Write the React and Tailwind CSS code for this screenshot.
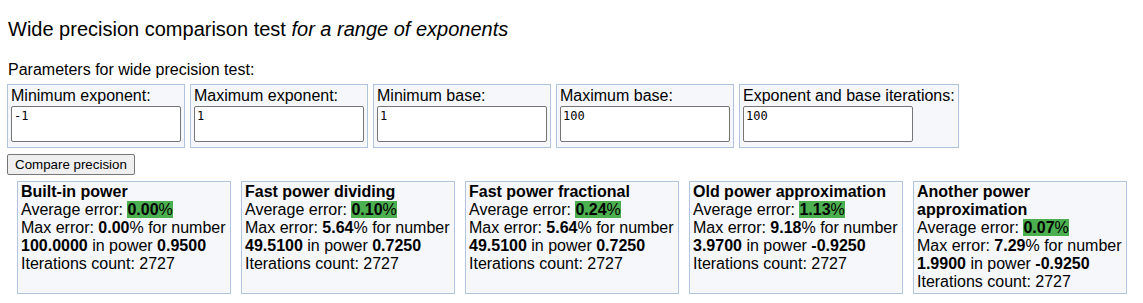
import React from "react";

const params = [
  { label: "Minimum exponent:", value: "-1" },
  { label: "Maximum exponent:", value: "1" },
  { label: "Minimum base:", value: "1" },
  { label: "Maximum base:", value: "100" },
  { label: "Exponent and base iterations:", value: "100" },
];

const results = [
  { name: "Built-in power", avg: "0.00", max: "0.00", num: "100.0000", pow: "0.9500" },
  { name: "Fast power dividing", avg: "0.10", max: "5.64", num: "49.5100", pow: "0.7250" },
  { name: "Fast power fractional", avg: "0.24", max: "5.64", num: "49.5100", pow: "0.7250" },
  { name: "Old power approximation", avg: "1.13", max: "9.18", num: "3.9700", pow: "-0.9250" },
  { name: "Another power approximation", avg: "0.07", max: "7.29", num: "1.9900", pow: "-0.9250" },
];

const App = () => {
  return (
    <div className="min-h-screen bg-white text-black font-['Liberation_Sans',Arial,sans-serif] pt-[18px] px-[7px]">
      {/* Heading */}
      <div className="text-[20px] leading-[23px] pl-[1px]">
        Wide precision comparison test <i>for a range of exponents</i>
      </div>

      <div className="mt-[20px] text-[16px] leading-[18px] pl-[1px]">
        Parameters for wide precision test:
      </div>

      {/* Parameter inputs */}
      <div className="mt-[5px] flex items-start gap-[5px]">
        {params.map((p) => (
          <div
            key={p.label}
            className="border border-[#b0c4de] bg-[#f5f7fa] pl-[3px] pr-[3px] pt-[2px] pb-[5px]"
          >
            <div className="text-[16px] leading-[18px] mb-[1px] whitespace-nowrap">{p.label}</div>
            <textarea
              defaultValue={p.value}
              className="block w-[170px] h-[36px] resize-none bg-white border border-[#767676] rounded-[2px] p-[2px] font-['DejaVu_Sans_Mono',monospace] text-[12px] leading-[15px] text-black"
            />
          </div>
        ))}
      </div>

      <button className="mt-[6px] block h-[21px] px-[7px] bg-[#efefef] border border-[#767676] rounded-[2px] text-[13.33px] leading-[15px] text-black">
        Compare precision
      </button>

      {/* Result cards */}
      <div className="mt-[6px] ml-[10px] mr-[9px] flex gap-[10px]">
        {results.map((r) => (
          <div
            key={r.name}
            className="flex-1 h-[113px] border border-[#b0c4de] bg-[#f5f7fa] pl-[3px] pr-[2px] pt-[1px] text-[16px] leading-[18px]"
          >
            <div className="font-bold">{r.name}</div>
            <div className="whitespace-nowrap">
              Average error: <span className="bg-[#4caf50]"><b>{r.avg}</b>%</span>
            </div>
            <div className="whitespace-nowrap">
              Max error: <b>{r.max}</b>% for number
            </div>
            <div className="whitespace-nowrap">
              <b>{r.num}</b> in power <b>{r.pow}</b>
            </div>
            <div className="whitespace-nowrap">Iterations count: 2727</div>
          </div>
        ))}
      </div>
    </div>
  );
};

export default App;
